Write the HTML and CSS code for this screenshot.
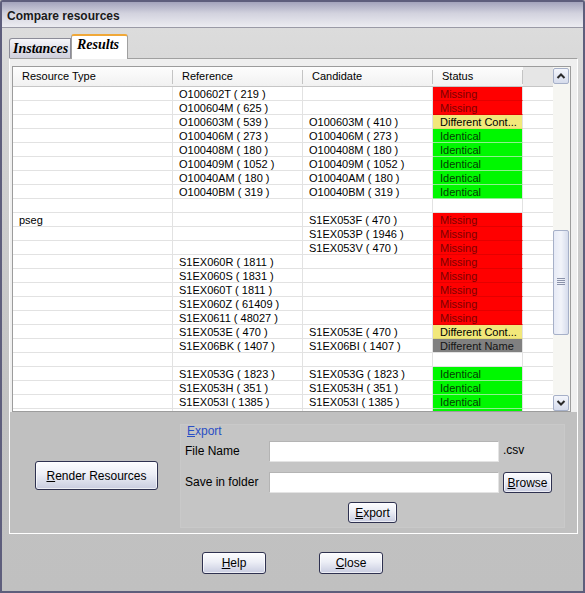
FILE: index.html
```html
<!DOCTYPE html>
<html>
<head>
<meta charset="utf-8">
<title>Compare resources</title>
<link rel="stylesheet" href="styles.css">
</head>
<body>
<div class="window">
  <div class="titlebar">Compare resources</div>
  <div class="body">
    <div class="tabs">
      <div class="tab tab-inactive">Instances</div>
      <div class="tab tab-active">Results</div>
    </div>
    <div class="panel">
      <div class="grid-area">
        <div class="table">
          <div class="cols">
            <div class="hdr">
              <div class="hc">Resource Type</div>
              <div class="hc">Reference</div>
              <div class="hc">Candidate</div>
              <div class="hc">Status</div>
              <div class="hc filler"></div>
            </div>
            <div class="rows">
              <div class="row"><div></div><div>O100602T ( 219 )</div><div></div><div class="st missing">Missing</div><div></div></div>
              <div class="row"><div></div><div>O100604M ( 625 )</div><div></div><div class="st missing">Missing</div><div></div></div>
              <div class="row"><div></div><div>O100603M ( 539 )</div><div>O100603M ( 410 )</div><div class="st diff">Different Cont...</div><div></div></div>
              <div class="row"><div></div><div>O100406M ( 273 )</div><div>O100406M ( 273 )</div><div class="st ident">Identical</div><div></div></div>
              <div class="row"><div></div><div>O100408M ( 180 )</div><div>O100408M ( 180 )</div><div class="st ident">Identical</div><div></div></div>
              <div class="row"><div></div><div>O100409M ( 1052 )</div><div>O100409M ( 1052 )</div><div class="st ident">Identical</div><div></div></div>
              <div class="row"><div></div><div>O10040AM ( 180 )</div><div>O10040AM ( 180 )</div><div class="st ident">Identical</div><div></div></div>
              <div class="row"><div></div><div>O10040BM ( 319 )</div><div>O10040BM ( 319 )</div><div class="st ident">Identical</div><div></div></div>
              <div class="row"><div></div><div></div><div></div><div class="st"></div><div></div></div>
              <div class="row"><div>pseg</div><div></div><div>S1EX053F ( 470 )</div><div class="st missing">Missing</div><div></div></div>
              <div class="row"><div></div><div></div><div>S1EX053P ( 1946 )</div><div class="st missing">Missing</div><div></div></div>
              <div class="row"><div></div><div></div><div>S1EX053V ( 470 )</div><div class="st missing">Missing</div><div></div></div>
              <div class="row"><div></div><div>S1EX060R ( 1811 )</div><div></div><div class="st missing">Missing</div><div></div></div>
              <div class="row"><div></div><div>S1EX060S ( 1831 )</div><div></div><div class="st missing">Missing</div><div></div></div>
              <div class="row"><div></div><div>S1EX060T ( 1811 )</div><div></div><div class="st missing">Missing</div><div></div></div>
              <div class="row"><div></div><div>S1EX060Z ( 61409 )</div><div></div><div class="st missing">Missing</div><div></div></div>
              <div class="row"><div></div><div>S1EX0611 ( 48027 )</div><div></div><div class="st missing">Missing</div><div></div></div>
              <div class="row"><div></div><div>S1EX053E ( 470 )</div><div>S1EX053E ( 470 )</div><div class="st diff">Different Cont...</div><div></div></div>
              <div class="row"><div></div><div>S1EX06BK ( 1407 )</div><div>S1EX06BI ( 1407 )</div><div class="st dname">Different Name</div><div></div></div>
              <div class="row"><div></div><div></div><div></div><div class="st"></div><div></div></div>
              <div class="row"><div></div><div>S1EX053G ( 1823 )</div><div>S1EX053G ( 1823 )</div><div class="st ident">Identical</div><div></div></div>
              <div class="row"><div></div><div>S1EX053H ( 351 )</div><div>S1EX053H ( 351 )</div><div class="st ident">Identical</div><div></div></div>
              <div class="row"><div></div><div>S1EX053I ( 1385 )</div><div>S1EX053I ( 1385 )</div><div class="st ident">Identical</div><div></div></div>
              <div class="row"><div></div><div></div><div></div><div class="st ident"></div><div></div></div>
            </div>
          </div>
          <div class="vscroll">
            <div class="sbtn sbtn-up">
              <svg width="14" height="14" viewBox="0 0 14 14"><polyline points="3.5,9 7,5.5 10.5,9" fill="none" stroke="#2a2a2a" stroke-width="2"/></svg>
            </div>
            <div class="thumb">
              <svg width="8" height="9" viewBox="0 0 8 9"><g stroke="#8a92aa" stroke-width="1"><line x1="0" y1="0.5" x2="8" y2="0.5"/><line x1="0" y1="2.5" x2="8" y2="2.5"/><line x1="0" y1="4.5" x2="8" y2="4.5"/><line x1="0" y1="6.5" x2="8" y2="6.5"/></g></svg>
            </div>
            <div class="sbtn sbtn-down">
              <svg width="14" height="14" viewBox="0 0 14 14"><polyline points="3.5,5 7,8.5 10.5,5" fill="none" stroke="#2a2a2a" stroke-width="2"/></svg>
            </div>
          </div>
        </div>
      </div>
      <div class="bottom">
        <button class="btn render"><u>R</u>ender Resources</button>
        <div class="export-group">
          <div class="legend"><u>E</u>xport</div>
          <div class="form">
            <div class="lbl">File Name</div>
            <input class="field" type="text">
            <div class="ext">.csv</div>
            <div class="lbl">Save in folder</div>
            <input class="field" type="text">
            <button class="btn browse"><u>B</u>rowse</button>
          </div>
          <button class="btn export"><u>E</u>xport</button>
        </div>
      </div>
    </div>
    <div class="footer">
      <button class="btn foot"><u>H</u>elp</button>
      <button class="btn foot"><u>C</u>lose</button>
    </div>
  </div>
</div>
</body>
</html>
```

FILE: styles.css
```css
* { box-sizing: border-box; }
html, body { margin: 0; padding: 0; }
body {
  width: 585px;
  height: 593px;
  overflow: hidden;
  font-family: "Liberation Sans", Arial, sans-serif;
  font-size: 12px;
  color: #000;
  background: #c0c0c0;
}
u { text-decoration: underline; text-underline-offset: 1px; }

.window {
  width: 585px;
  height: 593px;
  border: 2px solid #5e5e7c;
  border-radius: 3px 3px 0 0;
  display: flex;
  flex-direction: column;
}
.titlebar {
  flex: none;
  height: 26px;
  border-bottom: 1px solid #9a9aa6;
  background: linear-gradient(#a4a4bc, #d2d2de 45%, #ececf1);
  font-weight: bold;
  font-size: 12px;
  line-height: 24px;
  padding: 2px 0 0 5px;
  color: #1a1a1a;
}
.body {
  flex: 1;
  display: flex;
  flex-direction: column;
  background: linear-gradient(#dcdcdc, #d4d4d4 80px, #c2c2c2 380px, #c0c0c0);
}

/* tabs */
.tabs {
  flex: none;
  height: 30px;
  display: flex;
  align-items: flex-end;
  padding-left: 7px;
}
.tab {
  font-family: "Liberation Serif", "Times New Roman", serif;
  font-weight: bold;
  font-style: italic;
  font-size: 14px;
  color: #000;
}
.tab-inactive {
  width: 62px;
  height: 20px;
  border: 1px solid #8c8c98;
  border-bottom: none;
  border-radius: 3px 0 0 0;
  background: linear-gradient(#f6f6fa, #cfcfdc);
  padding-left: 3px;
  line-height: 19px;
}
.tab-active {
  width: 57px;
  height: 25px;
  margin-bottom: -1px;
  background: #fff;
  border: 1px solid #a0a0a0;
  border-top: 2px solid #f0a838;
  border-bottom: none;
  border-radius: 3px 3px 0 0;
  padding-left: 5px;
  line-height: 18px;
  position: relative;
  z-index: 1;
}

/* panel */
.panel {
  flex: none;
  margin-left: 7px;
  width: 569px;
  height: 476px;
  border: 1px solid #fff;
  border-top-color: #a0a0a0;
  display: flex;
  flex-direction: column;
}
.grid-area {
  flex: none;
  background: #efefef;
  padding: 7px 6px 0 2px;
}
.table {
  height: 346px;
  border: 1px solid #9c9c9c;
  background: #fff;
  display: flex;
}
.cols {
  flex: 1;
  overflow: hidden;
  display: flex;
  flex-direction: column;
}
.hdr {
  flex: none;
  height: 20px;
  display: grid;
  grid-template-columns: 160px 130px 130px 90px 1fr;
  border-bottom: 1px solid #c6c6c6;
  background: linear-gradient(#fdfdfd, #f1f1f1);
}
.hc {
  font-size: 11px;
  line-height: 19px;
  padding-left: 9px;
  white-space: nowrap;
  background: linear-gradient(#c4c4c4, #c4c4c4) no-repeat right 0 top 3px / 1px 14px;
}
.hc.filler { background: #e6e6e6; }

.rows {
  flex: 1;
  overflow: hidden;
  display: flex;
  flex-direction: column;
}
.row {
  flex: none;
  height: 14px;
  display: grid;
  grid-template-columns: 160px 130px 130px 90px 1fr;
}
.row > div {
  font-size: 11px;
  line-height: 14px;
  padding-left: 6px;
  white-space: nowrap;
  overflow: hidden;
  border-right: 1px solid #e2e2e2;
  border-bottom: 1px solid #e2e2e2;
}
.row > div:last-child { border-right: none; }
.row > .st { padding-left: 7px; }
.st.missing { background: #ff0000; color: #7c0000; border-bottom-color: #e40000; }
.st.ident { background: #00f800; color: #043c04; border-bottom-color: #8ef08e; }
.st.diff { background: #f2e87a; color: #000; border-bottom-color: #e0d870; }
.st.dname { background: #808080; color: #141414; border-bottom-color: #e2e2e2; }

/* scrollbar */
.vscroll {
  flex: none;
  width: 17px;
  background: #f6f6f2;
  display: flex;
  flex-direction: column;
  padding: 1px 1px 0 0;
}
.sbtn {
  flex: none;
  width: 16px;
  height: 16px;
  border: 1px solid #a6b0c8;
  border-radius: 2px;
  background: linear-gradient(#f4f6fc, #d6dcec);
  display: flex;
  align-items: center;
  justify-content: center;
}
.sbtn-down { margin-top: auto; }
.thumb {
  flex: none;
  margin-top: 146px;
  width: 16px;
  height: 105px;
  border: 1px solid #a6b0c8;
  border-radius: 2px;
  background: linear-gradient(to right, #e6eaf6, #f2f4fa 50%, #d6dcec);
  display: flex;
  align-items: center;
  justify-content: center;
}

/* bottom section */
.bottom {
  flex: 1;
  background: #c0c0c0;
  display: flex;
  align-items: flex-start;
  padding-left: 25px;
}
.btn {
  font-family: "Liberation Sans", Arial, sans-serif;
  font-size: 12px;
  color: #000;
  padding: 0;
  border: 1px solid #2e3150;
  border-radius: 3px;
  background: linear-gradient(#fdfdff, #eceef6 45%, #c8cce0);
  box-shadow: inset 0 0 0 1px rgba(255,255,255,0.65);
}
.render {
  flex: none;
  margin-top: 49px;
  width: 123px;
  height: 29px;
}
.export-group {
  flex: none;
  margin-left: 22px;
  margin-top: 12px;
  width: 385px;
  height: 104px;
  background: #c5c5c5;
  border: 1px solid #c9c9c9;
  padding-left: 4px;
}
.legend {
  color: #2a4fc4;
  margin-left: 2px;
  height: 16px;
  line-height: 12px;
}
.form {
  display: grid;
  grid-template-columns: 84px 230px auto;
  row-gap: 10px;
  align-items: center;
}
.lbl { line-height: 21px; white-space: nowrap; }
.field {
  width: 230px;
  height: 21px;
  margin: 0;
  padding: 0;
  background: #fff;
  border: 1px solid #b4b4b4;
  border-right-color: #e4e4e4;
  border-bottom-color: #e4e4e4;
}
.ext { padding-left: 4px; margin-top: -3px; }
.browse {
  margin-left: 4px;
  width: 49px;
  height: 21px;
}
.export {
  display: block;
  margin: 9px 0 0 163px;
  width: 49px;
  height: 21px;
}

/* footer */
.footer {
  flex: 1;
  display: flex;
  justify-content: center;
  align-items: flex-start;
  gap: 53px;
  padding-top: 18px;
}
.foot {
  width: 64px;
  height: 22px;
}
```
